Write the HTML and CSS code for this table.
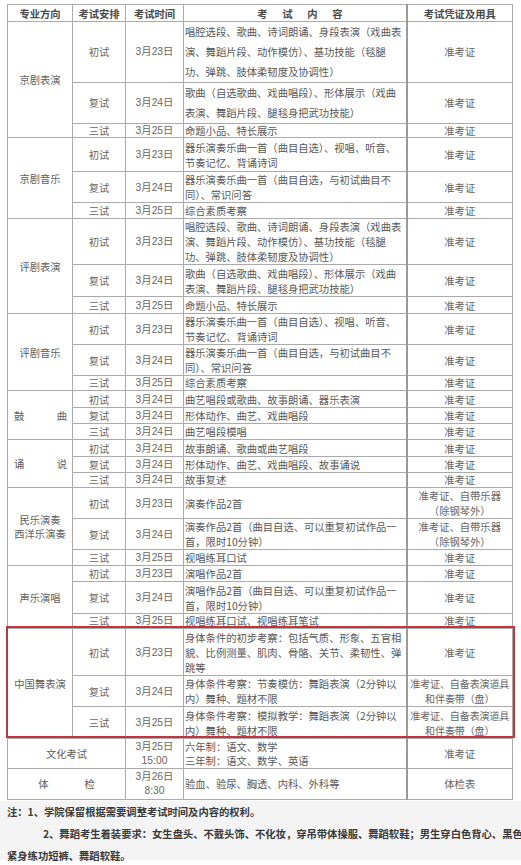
FILE: index.html
```html
<!DOCTYPE html>
<html lang="zh-CN">
<head>
<meta charset="utf-8">
<title>考试安排</title>
<link rel="stylesheet" href="styles.css">
</head>
<body>
<div class="table-area">
  <div class="table-wrap">
    <table class="exam">
      <colgroup>
        <col class="c-major"><col class="c-round"><col class="c-date"><col class="c-content"><col class="c-doc">
      </colgroup>
      <thead>
        <tr class="r17"><th>专业方向</th><th>考试安排</th><th>考试时间</th><th class="th-spaced">考试内容</th><th class="doc">考试凭证及用具</th></tr>
      </thead>
      <tbody>
        <tr class="r61 loose"><td rowspan="3" class="major">京剧表演</td><td>初试</td><td class="date">3月23日</td><td class="content">唱腔选段、歌曲、诗词朗诵、身段表演（戏曲表<br>演、舞蹈片段、动作模仿）、基功技能（毯腿<br>功、弹跳、肢体柔韧度及协调性）</td><td class="doc">准考证</td></tr>
        <tr class="r41 loose"><td>复试</td><td class="date">3月24日</td><td class="content">歌曲（自选歌曲、戏曲唱段）、形体展示（戏曲<br>表演、舞蹈片段、腿毯身把武功技能）</td><td class="doc">准考证</td></tr>
        <tr class="r14"><td>三试</td><td class="date">3月25日</td><td class="content">命题小品、特长展示</td><td class="doc">准考证</td></tr>

        <tr class="r34"><td rowspan="3" class="major">京剧音乐</td><td>初试</td><td class="date">3月23日</td><td class="content">器乐演奏乐曲一首（曲目自选）、视唱、听音、<br>节奏记忆、背诵诗词</td><td class="doc">准考证</td></tr>
        <tr class="r31"><td>复试</td><td class="date">3月24日</td><td class="content">器乐演奏乐曲一首（曲目自选，与初试曲目不<br>同）、常识问答</td><td class="doc">准考证</td></tr>
        <tr class="r16"><td>三试</td><td class="date">3月25日</td><td class="content">综合素质考察</td><td class="doc">准考证</td></tr>

        <tr class="r45"><td rowspan="3" class="major">评剧表演</td><td>初试</td><td class="date">3月23日</td><td class="content">唱腔选段、歌曲、诗词朗诵、身段表演（戏曲表<br>演、舞蹈片段、动作模仿）、基功技能（毯腿<br>功、弹跳、肢体柔韧度及协调性）</td><td class="doc">准考证</td></tr>
        <tr class="r32"><td>复试</td><td class="date">3月24日</td><td class="content">歌曲（自选歌曲、戏曲唱段）、形体展示（戏曲<br>表演、舞蹈片段、腿毯身把武功技能）</td><td class="doc">准考证</td></tr>
        <tr class="r17"><td>三试</td><td class="date">3月25日</td><td class="content">命题小品、特长展示</td><td class="doc">准考证</td></tr>

        <tr class="r31"><td rowspan="3" class="major">评剧音乐</td><td>初试</td><td class="date">3月23日</td><td class="content">器乐演奏乐曲一首（曲目自选）、视唱、听音、<br>节奏记忆、背诵诗词</td><td class="doc">准考证</td></tr>
        <tr class="r31"><td>复试</td><td class="date">3月24日</td><td class="content">器乐演奏乐曲一首（曲目自选，与初试曲目不<br>同）、常识问答</td><td class="doc">准考证</td></tr>
        <tr class="r15"><td>三试</td><td class="date">3月25日</td><td class="content">综合素质考察</td><td class="doc">准考证</td></tr>

        <tr class="r17"><td rowspan="3" class="major"><div class="spread"><span>鼓</span><span>曲</span></div></td><td>初试</td><td class="date">3月24日</td><td class="content">曲艺唱段或歌曲、故事朗诵、器乐表演</td><td class="doc">准考证</td></tr>
        <tr class="r16"><td>复试</td><td class="date">3月24日</td><td class="content">形体动作、曲艺、戏曲唱段</td><td class="doc">准考证</td></tr>
        <tr class="r16"><td>三试</td><td class="date">3月24日</td><td class="content">曲艺唱段模唱</td><td class="doc">准考证</td></tr>

        <tr class="r17"><td rowspan="3" class="major"><div class="spread"><span>诵</span><span>说</span></div></td><td>初试</td><td class="date">3月24日</td><td class="content">故事朗诵、歌曲或曲艺唱段</td><td class="doc">准考证</td></tr>
        <tr class="r16"><td>复试</td><td class="date">3月24日</td><td class="content">形体动作、曲艺、戏曲唱段、故事诵说</td><td class="doc">准考证</td></tr>
        <tr class="r15"><td>三试</td><td class="date">3月24日</td><td class="content">故事复述</td><td class="doc">准考证</td></tr>

        <tr class="r31"><td rowspan="3" class="major two-line">民乐演奏<br>西洋乐演奏</td><td>初试</td><td class="date">3月23日</td><td class="content">演奏作品2首</td><td class="doc">准考证、自带乐器<br>（除钢琴外）</td></tr>
        <tr class="r31"><td>复试</td><td class="date">3月24日</td><td class="content">演奏作品2首（曲目自选、可以重复初试作品一<br>首，限时10分钟）</td><td class="doc">准考证、自带乐器<br>（除钢琴外）</td></tr>
        <tr class="r16"><td>三试</td><td class="date">3月25日</td><td class="content">视唱练耳口试</td><td class="doc">准考证</td></tr>

        <tr class="r16"><td rowspan="3" class="major">声乐演唱</td><td>初试</td><td class="date">3月23日</td><td class="content">演唱作品2首</td><td class="doc">准考证</td></tr>
        <tr class="r32"><td>复试</td><td class="date">3月24日</td><td class="content">演唱作品2首（曲目自选、可以重复初试作品一<br>首，限时10分钟）</td><td class="doc">准考证</td></tr>
        <tr class="r15"><td>三试</td><td class="date">3月25日</td><td class="content">视唱练耳口试、视唱练耳笔试</td><td class="doc">准考证</td></tr>

        <tr class="r47"><td rowspan="3" class="major">中国舞表演</td><td>初试</td><td class="date">3月23日</td><td class="content">身体条件的初步考察：包括气质、形象、五官相<br>貌、比例测量、肌肉、骨骼、关节、柔韧性、弹<br>跳等</td><td class="doc">准考证</td></tr>
        <tr class="r31"><td>复试</td><td class="date">3月24日</td><td class="content">身体条件考察：节奏模仿：舞蹈表演（2分钟以<br>内）舞种、题材不限</td><td class="doc narrow">准考证、自备表演道具<br>和伴奏带（盘）</td></tr>
        <tr class="r32"><td>三试</td><td class="date">3月25日</td><td class="content">身体条件考察：模拟教学：舞蹈表演（2分钟以<br>内）舞种、题材不限</td><td class="doc narrow">准考证、自备表演道具<br>和伴奏带（盘）</td></tr>

        <tr class="r30 compact"><td colspan="2" class="major">文化考试</td><td class="date">3月25日<br>15:00</td><td class="content">六年制：语文、数学<br>三年制：语文、数学、英语</td><td class="doc">准考证</td></tr>
        <tr class="r31 compact"><td colspan="2" class="major"><div class="spread-wide"><span>体</span><span>检</span></div></td><td class="date">3月26日<br>8:30</td><td class="content">验血、验尿、胸透、内科、外科等</td><td class="doc">体检表</td></tr>
      </tbody>
    </table>
    <div class="highlight"></div>
  </div>
</div>
<div class="notes">
  <p class="note">注：1、学院保留根据需要调整考试时间及内容的权利。</p>
  <p class="note indent">2、舞蹈考生着装要求：女生盘头、不戴头饰、不化妆，穿吊带体操服、舞蹈软鞋；男生穿白色背心、黑色</p>
  <p class="note">紧身练功短裤、舞蹈软鞋。</p>
</div>
</body>
</html>
```
FILE: styles.css
```css
* { box-sizing: border-box; }
html, body { margin: 0; padding: 0; background: #ffffff; }
body {
  width: 521px;
  height: 865px;
  overflow: hidden;
  font-family: "Noto Sans CJK SC", "Liberation Sans", sans-serif;
  color: #555555;
}
.table-area { padding: 4px 0 0 7px; }
.table-wrap { position: relative; width: 505px; }

.exam {
  width: 505px;
  table-layout: fixed;
  border-collapse: collapse;
  font-size: 10.3px;
  line-height: 15px;
  border: 1px solid #8a8a8a;
}
.c-major { width: 65px; }
.c-round { width: 53px; }
.c-date { width: 58px; }
.c-content { width: 223px; }
.c-doc { width: 106px; }

.exam th, .exam td {
  border: 1px solid #ababab;
  padding: 0;
  text-align: center;
  vertical-align: middle;
  white-space: nowrap;
  overflow: hidden;
  color: #666666;
  font-weight: 400;
}
.exam th { color: #4a4a4a; font-weight: 700; }
.exam th.th-spaced { letter-spacing: 14.7px; padding-left: 25px; }
.exam .doc { border-left: 2px solid #9a9a9a; }
.exam td.narrow { font-size: 10px; letter-spacing: -0.1px; }
.exam td.content { text-align: left; padding-left: 1px; color: #585858; }
.exam td.date { font-family: "Liberation Sans", "Noto Sans CJK SC", sans-serif; }
.exam td.major { color: #606060; }
.exam td.two-line { line-height: 14px; }

.loose td { line-height: 20px; }
.loose td.major { line-height: 15px; }
.compact td { line-height: 14px; }

.r14 { height: 14px; }
.r14 td { line-height: 13px; }
.r15 { height: 15px; }
.r15 td { line-height: 14px; }
.r16 { height: 16px; }
.r17 { height: 17px; }
.r30 { height: 30px; }
.r31 { height: 31px; }
.r32 { height: 32px; }
.r34 { height: 34px; }
.r41 { height: 41px; }
.r45 { height: 45px; }
.r47 { height: 47px; }
.r61 { height: 61px; }

.spread {
  display: flex;
  justify-content: space-between;
  padding: 0 5px 0 6px;
}
.spread-wide {
  display: flex;
  justify-content: center;
  gap: 36px;
}

.highlight {
  position: absolute;
  left: -1px;
  top: 622px;
  width: 509px;
  height: 112px;
  border: 2px solid #c0353f;
  pointer-events: none;
}

.notes {
  margin-top: 1px;
  height: 59px;
  background: #f4f4f4;
  padding-left: 7px;
  overflow: visible;
}
.note {
  margin: 0;
  font-size: 10.3px;
  line-height: 22px;
  font-weight: 700;
  color: #3a3a3a;
  white-space: nowrap;
}
.note.indent { padding-left: 36px; }
```
